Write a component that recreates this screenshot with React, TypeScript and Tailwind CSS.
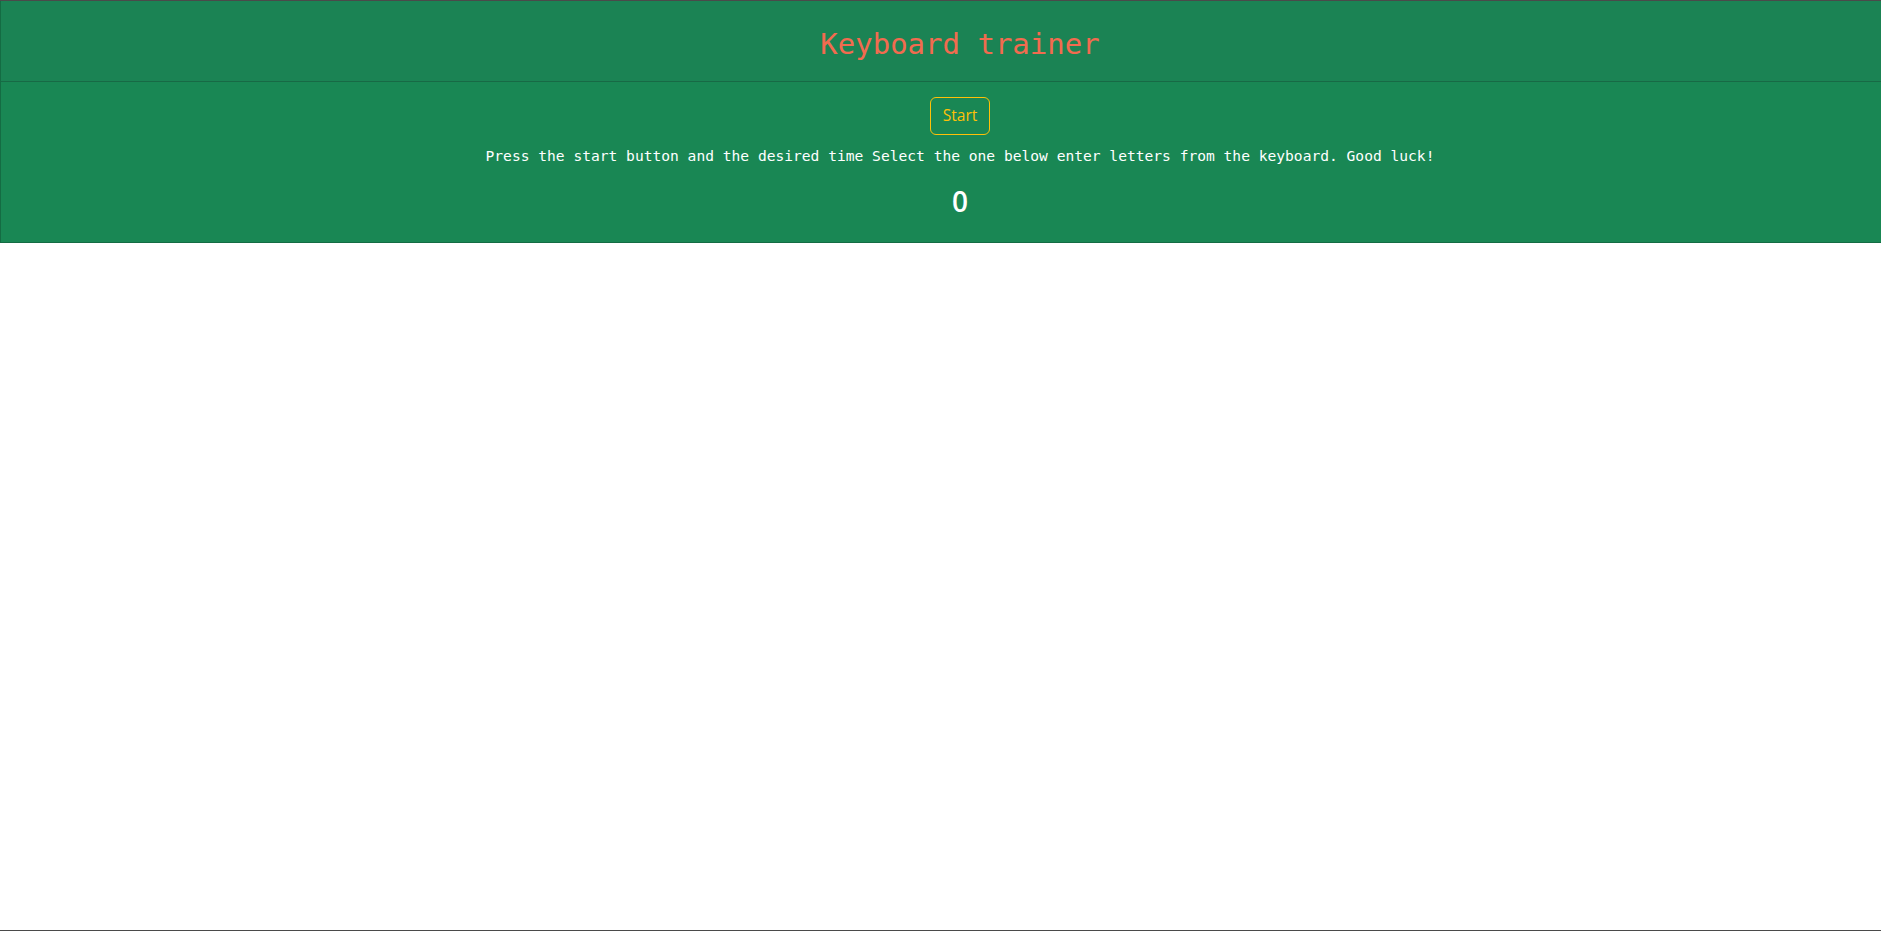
export default function App() {
  return (
    <div className="h-[931px] overflow-hidden bg-white border-t border-b border-[#4a4a4a]">
      <div className="w-[1920px] bg-[#198754] border border-[#146c43] border-t-0">
        <header className="h-[81px] bg-[#1b8354] border-b border-[#176a45] flex items-center justify-center">
          <h1 className="text-[29px] text-[#f26b4f] font-['DejaVu_Sans_Mono',monospace] leading-none pt-[7px]">
            Keyboard trainer
          </h1>
        </header>
        <div className="flex flex-col items-center pt-[15px] pb-[24px]">
          <button className="h-[38px] px-3 rounded-md border border-[#ffc107] text-[#ffc107] text-[15.5px] font-['Open_Sans',sans-serif]">
            Start
          </button>
          <p className="mt-[9px] h-6 leading-6 text-[14.6px] text-white font-['DejaVu_Sans_Mono',monospace]">
            Press the start button and the desired time Select the one below enter letters from the keyboard. Good luck!
          </p>
          <div className="mt-[16px] text-[28px] leading-[34px] font-semibold text-white font-['Open_Sans',sans-serif]">
            0
          </div>
        </div>
      </div>
    </div>
  );
}
